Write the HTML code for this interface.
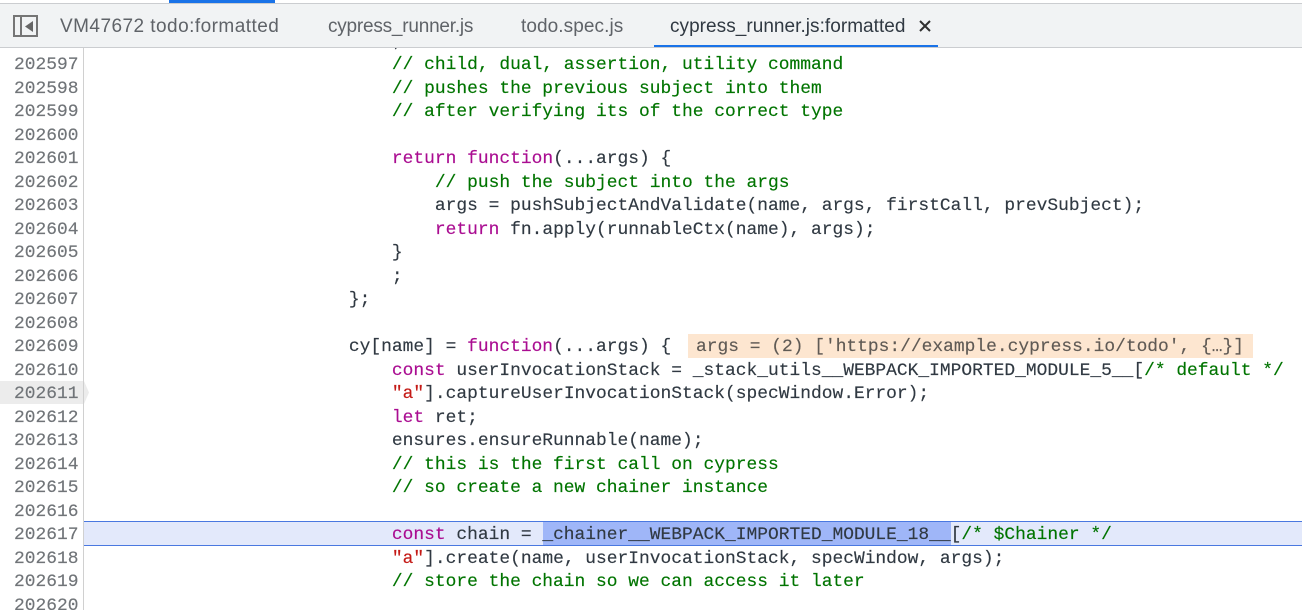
<!DOCTYPE html>
<html><head><meta charset="utf-8">
<style>
html,body{margin:0;padding:0;background:#fff;width:1302px;height:610px;overflow:hidden}
#root{position:relative;width:1302px;height:610px;overflow:hidden;background:#fff}
.abs{position:absolute}
#bar{left:0;top:3px;width:1302px;background:#f1f3f4;border-top:1px solid #cbcdd0;border-bottom:1px solid #cbcdd0;box-sizing:content-box;height:43px}
.tab{position:absolute;top:11px;font:19px/24px "Liberation Sans",sans-serif;color:#5f6368;white-space:nowrap}
.n,.l{position:absolute;margin-top:1px;font:17.91px/24px "Liberation Mono",monospace;white-space:pre;height:24px;-webkit-text-stroke:.15px currentColor}
.n{left:14px;color:#707478}
.l{left:91px;color:#303942}
.k{color:#aa0d91}.c{color:#007400}.s{color:#c41a16}
</style></head><body>
<div id="root">
<div class="abs" id="code" style="left:0;top:0;width:1302px;height:610px">
<div class="abs" style="left:84px;top:521px;width:1218px;height:25px;box-sizing:border-box;background:#e3e9fb;border-top:1px solid #4a78e0;border-bottom:1px solid #4a78e0"></div>
<div class="abs" style="left:543px;top:522px;width:408px;height:23px;background:#9fb6f8"></div>
<div class="abs" style="left:688px;top:334px;width:565px;height:24px;background:#fde6d0"></div>
<div class="abs" style="left:0;top:381px;width:84px;height:23px;background:#ececec"></div>
<svg class="abs" style="left:84px;top:381px" width="6" height="23"><path d="M0 0L5 11.5L0 23Z" fill="#ececec"/></svg>

<div class="l" style="top:29px">                            ;</div>
<div class="l c" style="top:52px">                            // child, dual, assertion, utility command</div>
<div class="l c" style="top:76px">                            // pushes the previous subject into them</div>
<div class="l c" style="top:99px">                            // after verifying its of the correct type</div>
<div class="l" style="top:146px">                            <span class="k">return</span> <span class="k">function</span>(...args) {</div>
<div class="l c" style="top:170px">                                // push the subject into the args</div>
<div class="l" style="top:193px">                                args = pushSubjectAndValidate(name, args, firstCall, prevSubject);</div>
<div class="l" style="top:217px">                                <span class="k">return</span> fn.apply(runnableCtx(name), args);</div>
<div class="l" style="top:240px">                            }</div>
<div class="l" style="top:264px">                            ;</div>
<div class="l" style="top:287px">                        };</div>
<div class="l" style="top:334px">                        cy[name] = <span class="k">function</span>(...args) {</div>
<div class="abs" style="left:696px;top:335px;font:17.91px/24px 'Liberation Mono',monospace;white-space:pre;color:#5f5a55;-webkit-text-stroke:.15px currentColor">args = (2) ['https://example.cypress.io/todo', {…}]</div>
<div class="l" style="top:358px">                            <span class="k">const</span> userInvocationStack = _stack_utils__WEBPACK_IMPORTED_MODULE_5__[<span class="c">/* default */</span></div>
<div class="l" style="top:381px">                            <span class="s">"a"</span>].captureUserInvocationStack(specWindow.Error);</div>
<div class="l" style="top:405px">                            <span class="k">let</span> ret;</div>
<div class="l" style="top:428px">                            ensures.ensureRunnable(name);</div>
<div class="l c" style="top:452px">                            // this is the first call on cypress</div>
<div class="l c" style="top:475px">                            // so create a new chainer instance</div>
<div class="l" style="top:522px">                            <span class="k">const</span> chain = _chainer__WEBPACK_IMPORTED_MODULE_18__[<span class="c">/* $Chainer */</span></div>
<div class="l" style="top:546px">                            <span class="s">"a"</span>].create(name, userInvocationStack, specWindow, args);</div>
<div class="l c" style="top:569px">                            // store the chain so we can access it later</div>
</div>

<div class="abs" style="left:83px;top:48px;width:1px;height:562px;background:#d0d0d0"></div>
<div class="n" style="top:52px">202597</div>
<div class="n" style="top:76px">202598</div>
<div class="n" style="top:99px">202599</div>
<div class="n" style="top:123px">202600</div>
<div class="n" style="top:146px">202601</div>
<div class="n" style="top:170px">202602</div>
<div class="n" style="top:193px">202603</div>
<div class="n" style="top:217px">202604</div>
<div class="n" style="top:240px">202605</div>
<div class="n" style="top:264px">202606</div>
<div class="n" style="top:287px">202607</div>
<div class="n" style="top:311px">202608</div>
<div class="n" style="top:334px">202609</div>
<div class="n" style="top:358px">202610</div>
<div class="n" style="top:381px">202611</div>
<div class="n" style="top:405px">202612</div>
<div class="n" style="top:428px">202613</div>
<div class="n" style="top:452px">202614</div>
<div class="n" style="top:475px">202615</div>
<div class="n" style="top:499px">202616</div>
<div class="n" style="top:522px">202617</div>
<div class="n" style="top:546px">202618</div>
<div class="n" style="top:569px">202619</div>
<div class="n" style="top:593px">202620</div>

<div class="abs" id="bar">
  <div class="tab" style="left:60px;letter-spacing:.46px">VM47672 todo:formatted</div>
  <div class="tab" style="left:328px;letter-spacing:-.22px">cypress_runner.js</div>
  <div class="tab" style="left:521px;letter-spacing:.08px">todo.spec.js</div>
  <div class="tab" style="left:670px;letter-spacing:.04px;color:#303942">cypress_runner.js:formatted</div>
</div>
<div class="abs" style="left:169px;top:0;width:106px;height:3px;background:#1a73e8"></div>
<div class="abs" style="left:654px;top:45px;width:284px;height:2px;background:#1a73e8"></div>
<svg class="abs" style="left:13px;top:15px" width="26" height="23" viewBox="0 0 26 23">
  <rect x="1" y="1" width="23" height="20" fill="none" stroke="#757575" stroke-width="2"/>
  <path d="M8 1V21" stroke="#757575" stroke-width="2"/>
  <path d="M20 6V17L12 11.5Z" fill="#666"/>
</svg>
<svg class="abs" style="left:918px;top:19px" width="14" height="14" viewBox="0 0 14 14">
  <path d="M2 2L12 12M12 2L2 12" stroke="#303030" stroke-width="2"/>
</svg>
</div>
</body></html>
